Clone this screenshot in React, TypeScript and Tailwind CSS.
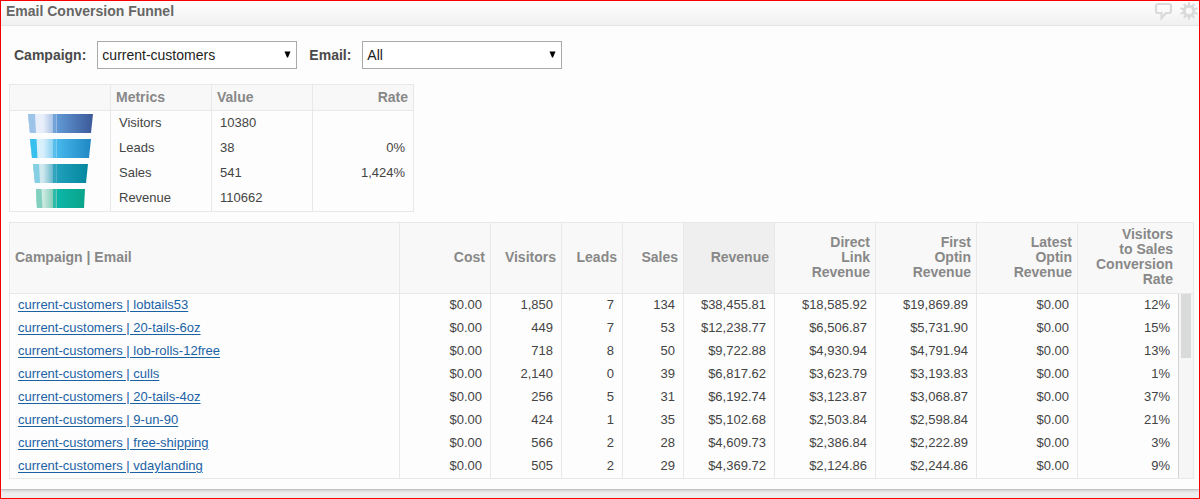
import React, { useState } from 'react';

interface Metric {
  label: string;
  value: string;
  rate: string;
}

const metrics: Metric[] = [
  { label: 'Visitors', value: '10380', rate: '' },
  { label: 'Leads', value: '38', rate: '0%' },
  { label: 'Sales', value: '541', rate: '1,424%' },
  { label: 'Revenue', value: '110662', rate: '' },
];

// edge = left strip, pale/mid = highlight fade, start/end = body fade
const funnelSteps = [
  { top: [0, 65], bottom: [2, 63], edge: '#9cc3e8', pale: '#e9effa', mid: '#a3bfe4', start: '#5f98d4', end: '#3d5a99' },
  { top: [2, 63], bottom: [4, 61], edge: '#35c0ee', pale: '#d8effc', mid: '#86cff2', start: '#45b6ea', end: '#1f86c2' },
  { top: [5, 60], bottom: [7, 58], edge: '#84cfe3', pale: '#cfe8ee', mid: '#5fb2c8', start: '#1f9fba', end: '#00849b' },
  { top: [8, 57], bottom: [9, 56], edge: '#84d0be', pale: '#cdebe2', mid: '#7fc9b6', start: '#0bb5a6', end: '#0a9f82' },
];

interface Column {
  label: string;
  width: string;
  sorted?: boolean;
}

const columns: Column[] = [
  { label: 'Cost', width: 'w-[91px]' },
  { label: 'Visitors', width: 'w-[71px]' },
  { label: 'Leads', width: 'w-[61px]' },
  { label: 'Sales', width: 'w-[61px]' },
  { label: 'Revenue', width: 'w-[91px]', sorted: true },
  { label: 'Direct Link Revenue', width: 'w-[101px]' },
  { label: 'First Optin Revenue', width: 'w-[101px]' },
  { label: 'Latest Optin Revenue', width: 'w-[101px]' },
];

const rows: string[][] = [
  ['lobtails53', '$0.00', '1,850', '7', '134', '$38,455.81', '$18,585.92', '$19,869.89', '$0.00', '12%'],
  ['20-tails-6oz', '$0.00', '449', '7', '53', '$12,238.77', '$6,506.87', '$5,731.90', '$0.00', '15%'],
  ['lob-rolls-12free', '$0.00', '718', '8', '50', '$9,722.88', '$4,930.94', '$4,791.94', '$0.00', '13%'],
  ['culls', '$0.00', '2,140', '0', '39', '$6,817.62', '$3,623.79', '$3,193.83', '$0.00', '1%'],
  ['20-tails-4oz', '$0.00', '256', '5', '31', '$6,192.74', '$3,123.87', '$3,068.87', '$0.00', '37%'],
  ['9-un-90', '$0.00', '424', '1', '35', '$5,102.68', '$2,503.84', '$2,598.84', '$0.00', '21%'],
  ['free-shipping', '$0.00', '566', '2', '28', '$4,609.73', '$2,386.84', '$2,222.89', '$0.00', '3%'],
  ['vdaylanding', '$0.00', '505', '2', '29', '$4,369.72', '$2,124.86', '$2,244.86', '$0.00', '9%'],
];

interface FilterProps {
  id: string;
  label: string;
  value: string;
  options: string[];
  onChange: (value: string) => void;
}

const Filter: React.FC<FilterProps> = ({ id, label, value, options, onChange }) => (
  <div className="flex items-center gap-[11px]">
    <label htmlFor={id} className="text-sm font-bold text-[#4a4a4a]">{label}</label>
    <div className="relative">
      <select
        id={id}
        value={value}
        onChange={e => onChange(e.target.value)}
        className="w-50 h-7 appearance-none border border-[#aaa] bg-white pl-1 pr-5 text-sm text-[#222]"
      >
        {options.map(o => <option key={o}>{o}</option>)}
      </select>
      <svg viewBox="0 0 7 7" className="absolute right-1.5 top-2.5 w-[7px] h-[7px] pointer-events-none" aria-hidden="true">
        <path d="M0.5 0.5H6.5L4 6.5H3Z" fill="#000" />
      </svg>
    </div>
  </div>
);

const Funnel: React.FC = () => (
  <svg viewBox="0 0 65 100" className="block w-[65px] h-25 ml-[18px]" role="img" aria-label="Funnel">
    <defs>
      {funnelSteps.map((s, i) => (
        <React.Fragment key={i}>
          <linearGradient id={`fade${i}`} gradientUnits="userSpaceOnUse" x1="9" y1="0" x2="26" y2="0">
            <stop offset="0" stopColor={s.pale} />
            <stop offset="0.35" stopColor={s.pale} />
            <stop offset="1" stopColor={s.mid} />
          </linearGradient>
          <linearGradient id={`body${i}`} gradientUnits="userSpaceOnUse" x1="30" y1="0" x2="64" y2="0">
            <stop offset="0" stopColor={s.start} />
            <stop offset="1" stopColor={s.end} />
          </linearGradient>
          <clipPath id={`step${i}`}>
            <path d={`M${s.top[0]} ${i * 25 + 3}H${s.top[1]}L${s.bottom[1]} ${i * 25 + 22}H${s.bottom[0]}Z`} />
          </clipPath>
        </React.Fragment>
      ))}
    </defs>
    {funnelSteps.map((s, i) => {
      const y = i * 25 + 3;
      const split = s.top[0] + 7 - i * 0.5;
      return (
        <g key={i} clipPath={`url(#step${i})`}>
          <rect x="0" y={y} width="66" height="19" fill={`url(#body${i})`} />
          <rect x="0" y={y} width="26" height="19" fill={`url(#fade${i})`} />
          <path d={`M0 ${y}H${split}L${split + 1} ${y + 19}H0Z`} fill={s.edge} />
          <rect x="25" y={y} width="5" height="19" fill={s.start} />
          <rect x="25" y={y} width="3" height="19" fill={s.mid} opacity="0.3" />
          <rect x="28" y={y} width="1" height="19" fill={s.mid} opacity="0.8" />
        </g>
      );
    })}
  </svg>
);

const App: React.FC = () => {
  const [campaign, setCampaign] = useState('current-customers');
  const [email, setEmail] = useState('All');

  return (
    <div className="border border-[#f00] bg-[#eee] pb-2 font-['Liberation_Sans',Arial,sans-serif] text-[#444]">
      <section className="bg-[#fdfdfd] border-b border-[#c4c4c4] pb-2.5 shadow-sm">
        <header className="h-[25px] flex items-start justify-between pl-[5px] border-b border-[#e4e4e4] bg-linear-to-b from-white to-[#f0f0f0]">
          <h1 className="text-sm leading-5 font-bold text-[#666]">Email Conversion Funnel</h1>
          <div className="flex items-start gap-[5px] text-[#dadada]">
            <button type="button" aria-label="Comments">
              <svg viewBox="0 0 20 20" className="block w-5 h-5">
                <path d="M4 3H15Q17 3 17 5V10Q17 12 15 12H12L7.5 17V12H4Q2 12 2 10V5Q2 3 4 3Z" fill="none" stroke="currentColor" strokeWidth="2.2" />
              </svg>
            </button>
            <button type="button" aria-label="Settings">
              <svg viewBox="0 0 20 20" className="block w-5 h-5">
                <circle cx="10" cy="10" r="4.7" fill="none" stroke="currentColor" strokeWidth="3" />
                {[0, 36, 72, 108, 144, 180, 216, 252, 288, 324].map(a => (
                  <path key={a} d="M8.6 5L9.2 1H10.8L11.4 5Z" fill="currentColor" transform={`rotate(${a} 10 10)`} />
                ))}
              </svg>
            </button>
          </div>
        </header>

        <div className="flex flex-wrap gap-3 px-[13px] pt-[15px]">
          <Filter id="campaign" label="Campaign:" value={campaign} options={['current-customers']} onChange={setCampaign} />
          <Filter id="email" label="Email:" value={email} options={['All']} onChange={setEmail} />
        </div>

        <div className="pl-2 pr-[5px] pt-[15px]">
          <table className="table-fixed w-[405px] border border-[#e8e8e8] border-separate border-spacing-0 text-[13px] leading-4">
            <colgroup>
              <col className="w-[100px]" />
              <col className="w-[101px]" />
              <col className="w-[101px]" />
              <col className="w-[101px]" />
            </colgroup>
            <thead>
              <tr className="h-[26px] bg-[#f8f8f8] text-sm leading-4 text-[#888] text-left">
                <th className="border-b border-[#e8e8e8]" aria-label="Funnel"></th>
                <th className="border-b border-l border-[#e8e8e8] px-[5px] pb-0.5">Metrics</th>
                <th className="border-b border-l border-[#e8e8e8] px-[5px] pb-0.5">Value</th>
                <th className="border-b border-l border-[#e8e8e8] px-[5px] pb-0.5 text-right">Rate</th>
              </tr>
            </thead>
            <tbody>
              {metrics.map((m, i) => (
                <tr key={m.label} className="h-[25px]">
                  {i === 0 && <td rowSpan={4} className="align-top"><Funnel /></td>}
                  <td className="border-l border-[#e8e8e8] px-2 pb-0.5">{m.label}</td>
                  <td className="border-l border-[#e8e8e8] px-2 pb-0.5">{m.value}</td>
                  <td className="border-l border-[#e8e8e8] px-2 pb-0.5 text-right">{m.rate}</td>
                </tr>
              ))}
            </tbody>
          </table>

          <table className="mt-2.5 table-fixed w-full border border-[#e8e8e8] border-separate border-spacing-0 text-[13px] leading-4">
            <colgroup>
              <col />
              {columns.map(c => <col key={c.label} className={c.width} />)}
              <col className="w-[101px]" />
              <col className="w-[15px]" />
            </colgroup>
            <thead>
              <tr className="h-[71px] bg-[#f8f8f8] text-sm leading-[15px] text-[#888] text-right">
                <th className="border-b border-[#e8e8e8] px-[5px] pb-0.5 text-left">Campaign | Email</th>
                {columns.map(c => (
                  <th key={c.label} className={`border-b border-l border-[#e8e8e8] pr-[5px] pb-0.5 ${c.sorted ? 'bg-[#efefef]' : ''} ${c.label.includes(' ') ? 'pl-7' : ''}`}>
                    {c.label}
                  </th>
                ))}
                <th colSpan={2} className="border-b border-l border-[#e8e8e8] pr-5 pl-3 pb-0.5">Visitors<br />to Sales Conversion Rate</th>
              </tr>
            </thead>
            <tbody>
              {rows.map((row, i) => (
                <tr key={row[0]} className="h-[23px]">
                  <td className="px-2 pb-0.5">
                    <a href="#" className="text-[#1b62a5] underline underline-offset-2">{`current-customers | ${row[0]}`}</a>
                  </td>
                  {row.slice(1).map((cell, j) => (
                    <td key={j} className="border-l border-[#e8e8e8] px-2 pb-0.5 text-right">{cell}</td>
                  ))}
                  {i === 0 && (
                    <td rowSpan={rows.length} className="border-l border-[#d4d4d4] bg-[#f6f6f6] align-top px-0.5">
                      <div className="h-16 w-2.5 bg-[#d9dada]"></div>
                    </td>
                  )}
                </tr>
              ))}
            </tbody>
          </table>
        </div>
      </section>
    </div>
  );
};

export default App;
